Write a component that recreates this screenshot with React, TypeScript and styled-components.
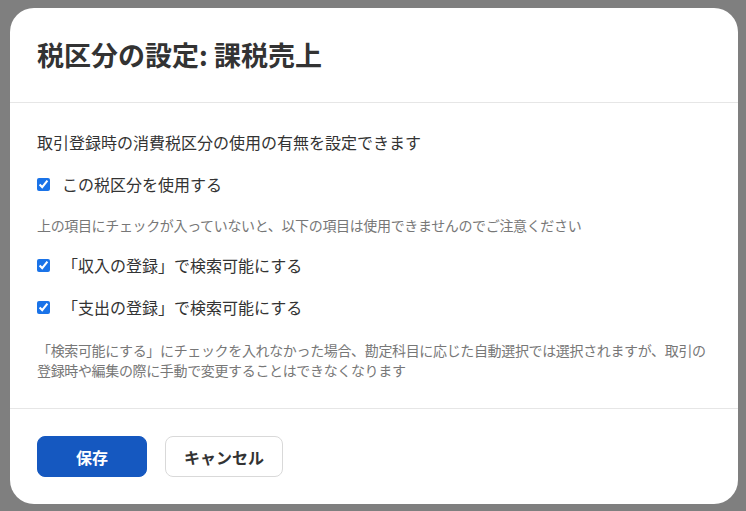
import React, { useState } from 'react';
import styled, { createGlobalStyle } from 'styled-components';

const GlobalStyle = createGlobalStyle`
  html, body { margin: 0; padding: 0; }
  body {
    font-family: "Noto Sans CJK JP", "Noto Sans", sans-serif;
    color: #333;
  }
`;

const Backdrop = styled.div`
  width: 746px;
  height: 511px;
  box-sizing: border-box;
  padding: 8px 8px 0 10px;
  background: #7f7f7f;
  overflow: hidden;
`;

const Modal = styled.div`
  width: 728px;
  height: 496px;
  background: #fff;
  border-radius: 24px;
  display: flex;
  flex-direction: column;
  overflow: hidden;
`;

const Header = styled.div`
  height: 96px;
  box-sizing: border-box;
  padding: 0 27px;
  display: flex;
  align-items: center;
  border-bottom: 1px solid #e6e6e6;
`;

const Title = styled.h2`
  margin: 0;
  font-size: 27px;
  font-weight: 700;
  line-height: 36px;
  color: #333;
`;

const Body = styled.div`
  flex: 1;
  padding: 27px 27px 28px;
  display: flex;
  flex-direction: column;
  gap: 18px;
  border-bottom: 1px solid #e6e6e6;
`;

const Lead = styled.p`
  margin: 0;
  font-size: 16px;
  line-height: 24px;
  color: #333;
`;

const Note = styled.p<{ $offset?: number }>`
  margin: ${({ $offset }) => $offset ?? 0}px 0 0;
  font-size: 14px;
  line-height: 20px;
  letter-spacing: -0.35px;
  color: #777;
`;

const CheckRow = styled.label`
  display: flex;
  align-items: center;
  gap: 12px;
  font-size: 16px;
  line-height: 24px;
  color: #333;
  cursor: pointer;
`;

const Check = styled.input`
  margin: 0;
  width: 13px;
  height: 13px;
  accent-color: #1a73e8;
`;

const Footer = styled.div`
  height: 96px;
  box-sizing: border-box;
  padding: 0 27px;
  display: flex;
  align-items: center;
  gap: 18px;
`;

const Button = styled.button<{ $primary?: boolean; $width: number }>`
  width: ${({ $width }) => $width}px;
  height: 41px;
  border-radius: 8px;
  font-family: inherit;
  font-size: 16px;
  font-weight: 700;
  cursor: pointer;
  background: ${({ $primary }) => ($primary ? '#1558c0' : '#fff')};
  color: ${({ $primary }) => ($primary ? '#fff' : '#333')};
  border: 1px solid ${({ $primary }) => ($primary ? '#1558c0' : '#d9d9d9')};
`;

export default function App() {
  const [use, setUse] = useState(true);
  const [income, setIncome] = useState(true);
  const [expense, setExpense] = useState(true);

  return (
    <>
      <GlobalStyle />
      <Backdrop>
        <Modal>
          <Header>
            <Title>税区分の設定: 課税売上</Title>
          </Header>
          <Body>
            <Lead>取引登録時の消費税区分の使用の有無を設定できます</Lead>
            <CheckRow>
              <Check type="checkbox" checked={use} onChange={(e) => setUse(e.target.checked)} />
              この税区分を使用する
            </CheckRow>
            <Note $offset={1}>上の項目にチェックが入っていないと、以下の項目は使用できませんのでご注意ください</Note>
            <CheckRow>
              <Check type="checkbox" checked={income} onChange={(e) => setIncome(e.target.checked)} />
              「収入の登録」で検索可能にする
            </CheckRow>
            <CheckRow>
              <Check type="checkbox" checked={expense} onChange={(e) => setExpense(e.target.checked)} />
              「支出の登録」で検索可能にする
            </CheckRow>
            <Note $offset={3}>
              「検索可能にする」にチェックを入れなかった場合、勘定科目に応じた自動選択では選択されますが、取引の登録時や編集の際に手動で変更することはできなくなります
            </Note>
          </Body>
          <Footer>
            <Button $primary $width={110}>保存</Button>
            <Button $width={118}>キャンセル</Button>
          </Footer>
        </Modal>
      </Backdrop>
    </>
  );
}
